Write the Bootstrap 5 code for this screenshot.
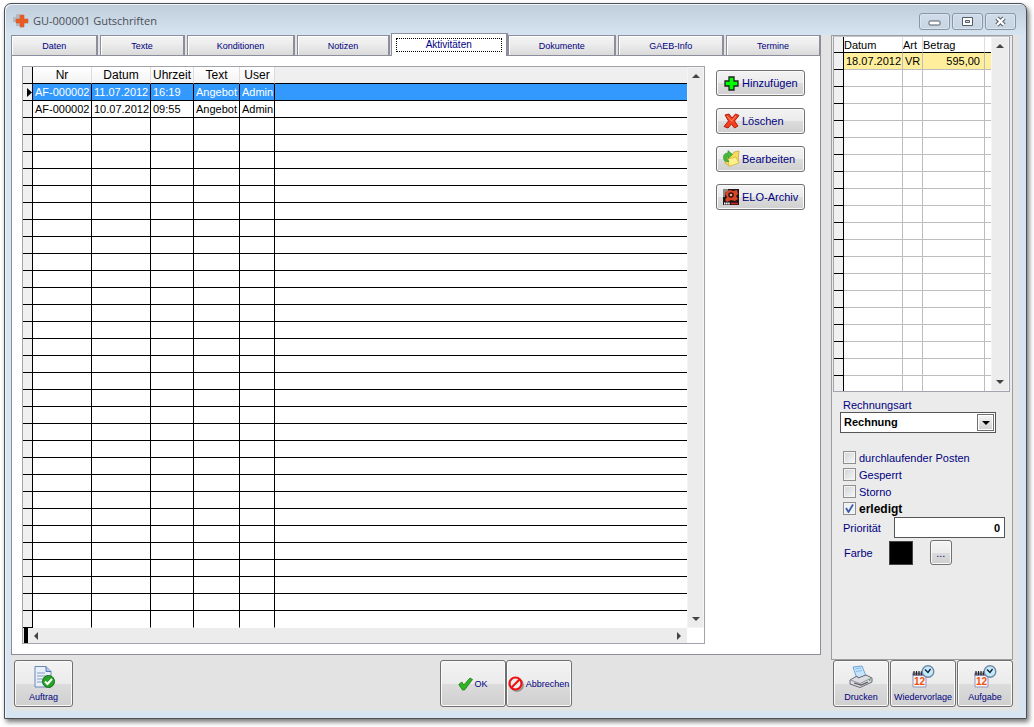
<!DOCTYPE html>
<html lang="de">
<head>
<meta charset="utf-8">
<meta name="viewport" content="width=device-width, initial-scale=1">
<title>GU-000001 Gutschriften</title>
<link href="https://cdn.jsdelivr.net/npm/bootstrap@5.3.0/dist/css/bootstrap.min.css" rel="stylesheet">
<style>
  body { font: 11px/14px "Liberation Sans", Arial, sans-serif; color: #000080; background: #fff; }
  button, input, select { font-family: inherit; color: inherit; }
  svg { display: block; flex: none; }
  .app-window { margin: 3px 7px 8px 4px; border: 1px solid #4c4f53; border-radius: 7px 7px 0 0; padding: 0 7px 7px 6px;
    background: linear-gradient(#bfcddb, #d7e4f2 32px); box-shadow: inset 1px 1px 0 #eef4fa, 2px 3px 5px rgba(0,0,0,.55); }
  .title-bar { height: 31px; padding: 5px 3px 0 2px; font: 11px/16px "Open Sans", "Noto Sans", sans-serif; color: #4b4f55; }
  .win-btns { gap: 2px; }
  .win-btn { width: 31px; height: 17px; padding: 0; border: 1px solid #8996a5; border-radius: 3px; background: linear-gradient(#d0dce8, #c7d4e2); box-shadow: inset 0 0 0 1px #d9e4ee; }
  .client { background: #e3e3e3; padding-right: 6px; gap: 10px; }
  .side-col { width: 182px; flex: none; }

  .tab-strip { gap: 2px; height: 20px; }
  .tab-btn { min-width: 0; padding: 1px 0 0; border: 1px solid #8c8e9b; border-right-width: 2px; border-bottom: 0;
    background: linear-gradient(#f4f4f4, #ececec 45%, #dadada); font-size: 9px; line-height: 14px; box-shadow: inset 1px 1px 0 #fff; }
  .tab-btn.active { height: 23px; margin: -2px -2px 0 -1px; padding: 3px 4px; background: #fff; position: relative; font-size: 10px; }
  .focus-box { border: 1px dotted #000; height: 14px; line-height: 12px; }
  .tab-pane-box { border: 1px solid #8c8e9b; background: #fff; padding: 10px 15px 10px 10px; gap: 11px; }

  .grid-frame { border: 1px solid #a3a3ab; background: #fff; }
  .data-grid { width: 100%; table-layout: fixed; border-collapse: separate; border-spacing: 0; color: #000; line-height: 14px; }
  .data-grid th, .data-grid td { height: 17px; padding: 0 0 0 2px; border: 0 solid #000; border-width: 0 1px 1px 0; white-space: nowrap; overflow: hidden; font-weight: 400; vertical-align: middle; line-height: 14px; }
  .data-grid th { background: linear-gradient(#fff, #f3f3f3); border-right-color: #ddd; text-align: center; padding: 0; }
  .data-grid .gutter { background: #f0f0f0; padding: 0 0 0 4px; border-right-color: #000; }
  .data-grid .rest { border-right: 0; }
  .data-grid th.rest { background: #efefef; }
  .main-grid th { font-size: 12px; }
  .main-grid tbody tr:last-child td:not(.gutter) { border-bottom-color: #fff; }
  .row-selected td:not(.gutter) { background: #39f; color: #fff; }
  .pay-grid th, .pay-grid th.rest { text-align: left; height: 16px; background: #fff; }
  .pay-grid td:not(.gutter) { border-color: #bdbdbd; }
  .pay-grid tbody tr:last-child td { height: 15px; border-bottom: 0; }
  .row-open td:not(.gutter) { background: #ffef9c; }
  .scroll-v { width: 17px; flex: none; background: #ececec; border: 1px solid #f4f4f4; padding: 6px 0; }
  .pay-grid + .scroll-v { width: 18px; }
  .scroll-h { height: 15px; background: #ececec; margin-right: 17px; }
  .scroll-btn { border: 0; padding: 0; background: none; }

  .tool-btn, .big-btn, .dots-btn { border: 1px solid #707070; border-radius: 3px; background: linear-gradient(#f3f3f3, #ebebeb 50%, #dcdcdc 51%, #cfcfcf); box-shadow: inset 0 0 0 1px #fafafa; padding: 0; }
  .tool-btn { width: 89px; height: 26px; padding: 0 0 1px 6px; gap: 2px; white-space: nowrap; }
  .side-tools { gap: 12px; margin-top: 4px; }
  .big-btn { height: 47px; font-size: 9px; line-height: 12px; gap: 2px; }
  .w-s { width: 56px; } .w-m { width: 59px; } .w-l { width: 66px; }
  .bottom-bar { padding: 5px 0 4px 3px; }
  .gap-left { flex: 366 1 0; } .gap-right { flex: 249 1 0; }

  .side-panel { border: 1px solid #9d9da4; background: #ebebeb; height: 625px; }
  .side-panel .grid-frame { margin: 0 2px 0 1px; border-top-color: #c4c4c8; }
  .fields { padding: 6px 7px 0 8px; }
  .combo select { appearance: none; width: 156px; height: 21px; padding: 0 3px 2px; border: 1px solid #555; border-radius: 0; background: #fff; color: #000; font-weight: 700; font-size: 11px; }
  .combo .drop { position: absolute; right: 2px; top: 2px; width: 17px; height: 17px; border: 1px solid #707070; background: linear-gradient(#f5f5f5, #d0d0d0); box-shadow: inset 0 0 0 1px #fff; pointer-events: none; }
  .tick-row { height: 17px; gap: 3px; padding-left: 3px; }
  .tick-row input { appearance: none; width: 13px; height: 13px; margin: 0; border: 1px solid #8e8f8f; background: linear-gradient(135deg, #cfd3d8, #f7f7f7); box-shadow: inset 0 0 0 1px #f4f4f4; }
  .tick-row input:checked { background: #eef1f6 url("data:image/svg+xml,%3Csvg xmlns='http://www.w3.org/2000/svg' viewBox='0 0 11 11'%3E%3Cpath d='M2 5l2.500 4L9 1.500' fill='none' stroke='%233e5ca6' stroke-width='1.800'/%3E%3C/svg%3E"); }
  .done { font-size: 12px; font-weight: 700; color: #000; }
  .prio { width: 111px; height: 21px; border: 1px solid #555; background: #fff; text-align: right; font-weight: 700; color: #000; padding: 0 4px; font-size: 11px; }
  .color-row { padding: 2px 0 0 4px; }
  .swatch { width: 24px; height: 24px; background: #000; border: 1px solid #444; margin-left: 16px; }
  .dots-btn { width: 22px; height: 25px; margin-left: 17px; }
  .side-actions { gap: 1px; padding-left: 2px; margin-right: -1px; }
</style>
</head>
<body>
<svg class="d-none" aria-hidden="true">
  <defs>
    <symbol id="calendar" viewBox="0 0 24 24">
      <path d="M2 9h13v13H2z" fill="#f4f4fb" stroke="#9595b4"/><path d="M1.500 7.500h14V11h-14z" fill="#8686a4"/>
      <path d="M3 6v4M5.500 6v4M8 6v4M10.500 6v4" stroke="#222" stroke-width="1.200"/>
      <text x="3" y="20" font-size="10" font-weight="700" fill="#f0500a" font-family="Liberation Sans, sans-serif">12</text>
      <circle cx="17" cy="6.500" r="5.800" fill="#c2eafa" stroke="#7089a6" stroke-width="1.400"/>
      <path d="M14 4.500l3 3L19.500 4" fill="none" stroke="#123" stroke-width="1.300"/>
    </symbol>
  </defs>
</svg>

<div class="app-window">
  <header class="title-bar d-flex align-items-start">
    <div class="d-flex align-items-center pt-1 flex-grow-1">
      <svg width="16" height="16" viewBox="0 0 16 16"><path d="M3 1h4v3h3v5H7v4H3V9H0V4h3z" fill="#b5b9be"/><path d="M7 2h4v4h4v4h-4v4H7v-4H3V6h4z" fill="#ea5b21" stroke="#c9633b" stroke-width=".6"/></svg>
      <span class="ms-1 pt-px">GU-000001 Gutschriften</span>
    </div>
    <div class="win-btns d-flex pt-1">
      <button class="win-btn" aria-label="Minimieren"><svg class="m-auto" width="13" height="11"><rect x="1" y="5" width="11" height="4" rx="1" fill="#fff" stroke="#555d66"/></svg></button>
      <button class="win-btn" aria-label="Maximieren"><svg class="m-auto" width="13" height="11"><path d="M1.500 1.500h10v8h-10z" fill="#fff" stroke="#555d66"/><path d="M4.500 4.500h4v2h-4z" fill="#c9d6e3" stroke="#555d66"/></svg></button>
      <button class="win-btn" aria-label="Schließen"><svg class="m-auto" width="13" height="11"><path d="M3 2l7 7M10 2L3 9" stroke="#555d66" stroke-width="4.500"/><path d="M3 2l7 7M10 2L3 9" stroke="#fff" stroke-width="2.400"/></svg></button>
    </div>
  </header>

  <div class="client d-flex">
    <main class="flex-grow-1 d-flex flex-column">
      <div class="tab-strip d-flex" role="tablist">
        <button class="tab-btn" role="tab" style="flex:88 1 0">Daten</button>
        <button class="tab-btn" role="tab" style="flex:85 1 0">Texte</button>
        <button class="tab-btn" role="tab" style="flex:110 1 0">Konditionen</button>
        <button class="tab-btn" role="tab" style="flex:93 1 0">Notizen</button>
        <button class="tab-btn active" role="tab" aria-selected="true" style="flex:111 1 0"><div class="focus-box">Aktivitäten</div></button>
        <button class="tab-btn" role="tab" style="flex:110 1 0">Dokumente</button>
        <button class="tab-btn" role="tab" style="flex:107 1 0">GAEB-Info</button>
        <button class="tab-btn" role="tab" style="flex:96 1 0">Termine</button>
      </div>

      <section class="tab-pane-box d-flex">
        <div class="grid-frame flex-grow-1">
          <div class="d-flex">
            <table class="data-grid main-grid">
              <colgroup><col style="width:10px"><col style="width:59px"><col style="width:59px"><col style="width:43px"><col style="width:46px"><col style="width:35px"><col></colgroup>
              <thead><tr><th class="gutter"></th><th>Nr</th><th>Datum</th><th>Uhrzeit</th><th>Text</th><th>User</th><th class="rest"></th></tr></thead>
              <tbody data-blank="30">
                <tr class="row-selected"><td class="gutter"><svg width="5" height="9"><path d="M0 0l5 4.500L0 9z"/></svg></td><td>AF-000002</td><td>11.07.2012</td><td>16:19</td><td>Angebot</td><td>Admin</td><td class="rest"></td></tr>
                <tr><td class="gutter"></td><td>AF-000002</td><td>10.07.2012</td><td>09:55</td><td>Angebot</td><td>Admin</td><td class="rest"></td></tr>
              </tbody>
            </table>
            <div class="scroll-v d-flex flex-column align-items-center justify-content-between">
              <button class="scroll-btn" aria-label="Nach oben"><svg width="8" height="4"><path d="M0 4l4-4 4 4z" fill="#444"/></svg></button>
              <button class="scroll-btn" aria-label="Nach unten"><svg width="8" height="4"><path d="M0 0l4 4 4-4z" fill="#444"/></svg></button>
            </div>
          </div>
          <div class="scroll-h d-flex align-items-center pe-1">
            <svg width="5" height="15" class="me-1"><path d="M1 0h4v15H1z"/></svg>
            <button class="scroll-btn ms-px me-auto" aria-label="Nach links"><svg width="6" height="8"><path d="M6 0L2 4l4 4z" fill="#444"/></svg></button>
            <button class="scroll-btn" aria-label="Nach rechts"><svg width="6" height="8"><path d="M0 0l4 4-4 4z" fill="#444"/></svg></button>
          </div>
        </div>

        <div class="side-tools d-flex flex-column">
          <button class="tool-btn d-flex align-items-center">
            <svg width="17" height="16" viewBox="0 0 17 16"><path d="M6 2h5v4h4v5h-4v4H6v-4H2V6h4z" fill="#0f0" stroke="#222" stroke-width="1.300"/></svg>Hinzufügen</button>
          <button class="tool-btn d-flex align-items-center">
            <svg width="17" height="16" viewBox="0 0 17 16"><path d="M2 2l4-1 3 4 3.500-4L16 2.500 11.500 8l3.500 5-3.500 2-3-4-3.500 4L1 13.500 5.500 8z" fill="#f2401f" stroke="#b81c0c"/><path d="M4 3l5 5.500M13 3L8.500 8" stroke="#ff9373"/></svg>Löschen</button>
          <button class="tool-btn d-flex align-items-center">
            <svg width="17" height="17" viewBox="0 0 17 17"><path d="M3 5l7-1 1-2 5-1-1 11-9 4-4-3z" fill="#f5dc5c" stroke="#c19e30" stroke-width=".7"/><path d="M5 9l8-2 3 6-10 3.500z" fill="#fff08c" stroke="#d0ad2c" stroke-width=".7"/><path d="M1 10C-.5 5 1.500 3 5 3V.5l4.500 4-4.500 4V6C3.500 6 3.500 9 6 11.500 3.500 12 2 11.500 1 10z" fill="#49b83e" stroke="#2c8f2a" stroke-width=".6"/></svg>Bearbeiten</button>
          <button class="tool-btn d-flex align-items-center">
            <svg width="17" height="16" viewBox="0 0 17 16"><path d="M0 0h16v16H0z" fill="#1d1616"/><path d="M0 0h5v2L2 4v4H0z" fill="#8d8583"/><path d="M4 2l3-1 3 1 4-1 1 4-2 2 2 3-3 2-4-1-4 2-2-2 2-3-2-3z" fill="#da4525"/><circle cx="8" cy="6" r="2.800" fill="#301414"/><circle cx="8" cy="6" r="1.300" fill="#eda58c"/><path d="M1 14.500h6" stroke="#fff" stroke-width="2" stroke-dasharray="1.500 .6"/><path d="M8 14.500h7" stroke="#d22" stroke-width="1.500"/></svg>ELO-Archiv</button>
        </div>
      </section>

      <footer class="bottom-bar d-flex">
        <button class="big-btn w-m d-flex flex-column align-items-center justify-content-center">
          <svg width="24" height="24" viewBox="0 0 24 24"><path d="M3 1.500h11l5 5V22H3z" fill="#e6effa" stroke="#6c86b0"/><path d="M14 1.500v5h5" fill="#a9c4e8" stroke="#5878ac"/><path d="M5 8h8M5 11h11M5 14h7M5 17h6" stroke="#a8b9d2" stroke-width="1.500"/><circle cx="16.500" cy="16.500" r="6" fill="#27a327" stroke="#147014"/><path d="M13 16.500l2.500 2.500 4.500-5" fill="none" stroke="#fff" stroke-width="2"/></svg>
          Auftrag</button>
        <div class="gap-left"></div>
        <button class="big-btn w-l d-flex align-items-center justify-content-center">
          <svg width="15" height="14" viewBox="0 0 15 14"><path d="M.8 7.500l3-2.500 2 3L12 1l2.500 1.500L6.500 13H4.500z" fill="#31b422" stroke="#157a10" stroke-width=".8"/></svg>OK</button>
        <button class="big-btn w-l d-flex align-items-center justify-content-center">
          <svg width="16" height="16" viewBox="0 0 16 16"><circle cx="9" cy="9" r="6" fill="none" stroke="#999" stroke-width="2"/><circle cx="7.500" cy="7.500" r="6" fill="#eee" stroke="#f01010" stroke-width="2.200"/><path d="M3.500 11.500l8-8" stroke="#f01010" stroke-width="2.200"/></svg>Abbrechen</button>
        <div class="gap-right"></div>
      </footer>
    </main>

    <aside class="side-col d-flex flex-column">
      <section class="side-panel">
        <div class="grid-frame d-flex">
          <table class="data-grid pay-grid">
            <colgroup><col style="width:10px"><col style="width:59px"><col style="width:20px"><col style="width:62px"><col></colgroup>
            <thead><tr><th class="gutter"></th><th>Datum</th><th>Art</th><th>Betrag</th><th class="rest"></th></tr></thead>
            <tbody data-blank="19">
              <tr class="row-open"><td class="gutter"></td><td>18.07.2012</td><td>VR</td><td class="text-end pe-1">595,00</td><td class="rest"></td></tr>
            </tbody>
          </table>
          <div class="scroll-v d-flex flex-column align-items-center justify-content-between">
            <button class="scroll-btn" aria-label="Nach oben"><svg width="8" height="4"><path d="M0 4l4-4 4 4z" fill="#444"/></svg></button>
            <button class="scroll-btn" aria-label="Nach unten"><svg width="8" height="4"><path d="M0 0l4 4 4-4z" fill="#444"/></svg></button>
          </div>
        </div>
        <form class="fields">
          <label for="art" class="d-block" style="padding-left:3px">Rechnungsart</label>
          <div class="combo position-relative d-inline-block mb-3">
            <select id="art" class="d-block"><option>Rechnung</option></select>
            <span class="drop d-flex align-items-center justify-content-center"><svg width="8" height="4"><path d="M0 0h8L4 4z"/></svg></span>
          </div>
          <div class="tick-row d-flex align-items-center"><input type="checkbox" id="durch"><label for="durch">durchlaufender Posten</label></div>
          <div class="tick-row d-flex align-items-center"><input type="checkbox" id="gesperrt"><label for="gesperrt">Gesperrt</label></div>
          <div class="tick-row d-flex align-items-center"><input type="checkbox" id="storno"><label for="storno">Storno</label></div>
          <div class="tick-row d-flex align-items-center"><input type="checkbox" id="erledigt" checked><label for="erledigt" class="done">erledigt</label></div>
          <div class="d-flex align-items-center justify-content-between"><label for="prio" style="padding-left:3px">Priorität</label><input id="prio" class="prio" value="0"></div>
          <div class="color-row d-flex align-items-center">Farbe<span class="swatch"></span><button type="button" class="dots-btn">...</button></div>
        </form>
      </section>
      <div class="side-actions d-flex">
        <button class="big-btn w-s d-flex flex-column align-items-center justify-content-center">
          <svg width="24" height="24" viewBox="0 0 24 24"><path d="M4 2l9-1 4 10-9 3z" fill="#c5e4fb" stroke="#6fa5d8"/><path d="M6 4l6-1M7 6.500l6-1" stroke="#85bcec"/><path d="M1 15l7-4 1 2 8-3 6 3v4l-12 5.500L1 19z" fill="#dcdce2" stroke="#696973"/><path d="M1.500 15l9.500 3.500L22.500 13" fill="none" stroke="#95959e"/><path d="M5 18l7 2 7-3" stroke="#555" stroke-width="1.200" fill="none"/><path d="M20 15h1.500" stroke="#3a3" stroke-width="1.500"/></svg>
          Drucken</button>
        <button class="big-btn w-l d-flex flex-column align-items-center justify-content-center"><svg width="24" height="24"><use href="#calendar"/></svg>Wiedervorlage</button>
        <button class="big-btn w-s d-flex flex-column align-items-center justify-content-center"><svg width="24" height="24"><use href="#calendar"/></svg>Aufgabe</button>
      </div>
    </aside>
  </div>
</div>

<script src="https://cdn.jsdelivr.net/npm/bootstrap@5.3.0/dist/js/bootstrap.bundle.min.js"></script>
<script>
  // Fill each grid with its empty rows
  document.querySelectorAll('tbody[data-blank]').forEach(function (body) {
    var model = body.lastElementChild;
    for (var i = 0; i < +body.dataset.blank; i++) {
      var row = model.cloneNode(true);
      row.className = '';
      Array.from(row.cells).forEach(function (c) { c.textContent = ''; });
      body.appendChild(row);
    }
  });
</script>
</body>
</html>
